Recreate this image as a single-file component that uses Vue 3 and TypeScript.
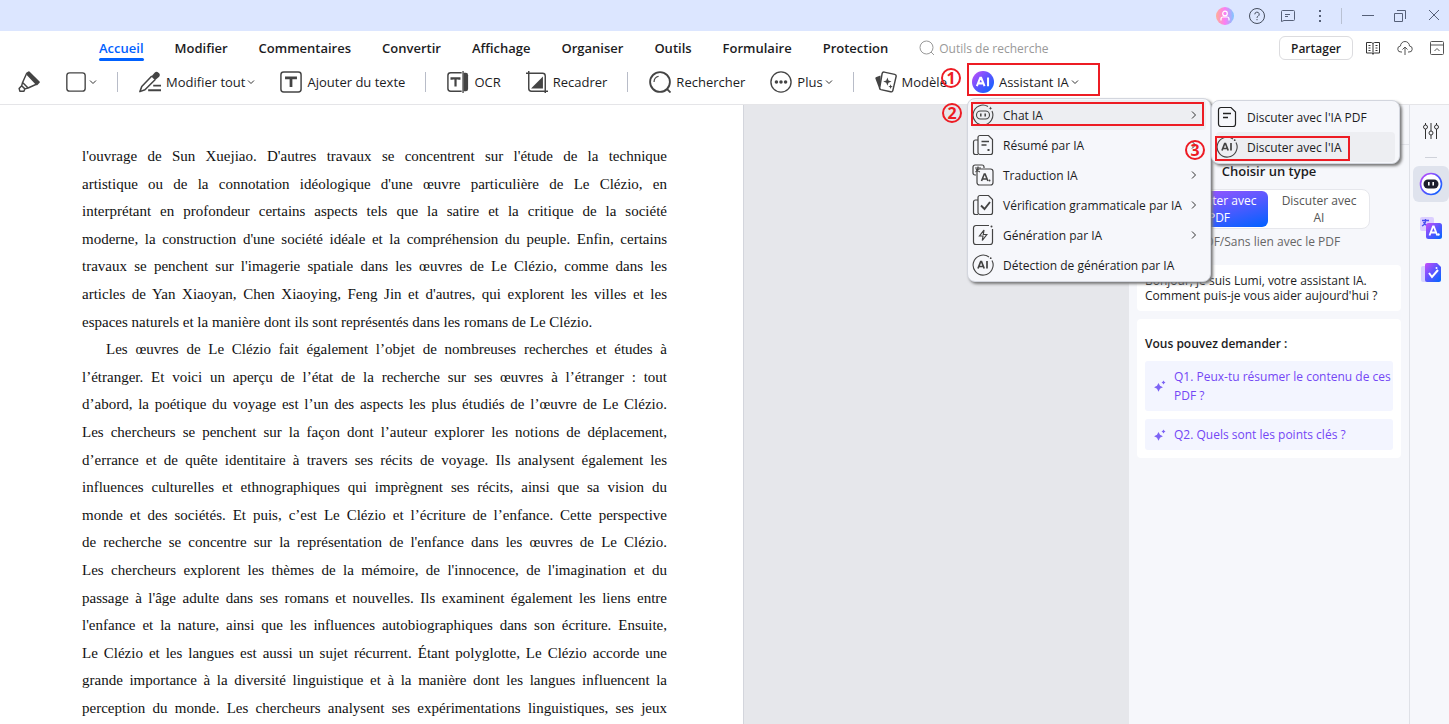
<script setup lang="ts">
import { ref } from 'vue'

interface Tool { icon: string; label?: string; arrow?: boolean }
interface MenuItem { icon: string; label: string; arrow?: boolean }

const tabs: string[] = ['Accueil', 'Modifier', 'Commentaires', 'Convertir', 'Affichage', 'Organiser', 'Outils', 'Formulaire', 'Protection']
const activeTab = ref('Accueil')
const query = ref('')

const toolGroups: Tool[][] = [
  [{ icon: 'highlighter' }, { icon: 'square', arrow: true }],
  [{ icon: 'edit', label: 'Modifier tout', arrow: true }, { icon: 'text', label: 'Ajouter du texte' }],
  [{ icon: 'ocr', label: 'OCR' }, { icon: 'crop', label: 'Recadrer' }],
  [{ icon: 'search', label: 'Rechercher' }, { icon: 'more', label: 'Plus', arrow: true }],
  [{ icon: 'template', label: 'Modèle' }, { icon: 'ai-fill', label: 'Assistant IA', arrow: true }],
]

const menu: MenuItem[] = [
  { icon: 'bot', label: 'Chat IA', arrow: true },
  { icon: 'summary', label: 'Résumé par IA', arrow: true },
  { icon: 'translate', label: 'Traduction IA', arrow: true },
  { icon: 'check', label: 'Vérification grammaticale par IA', arrow: true },
  { icon: 'bolt', label: 'Génération par IA', arrow: true },
  { icon: 'ai', label: 'Détection de génération par IA' },
]
const submenu: MenuItem[] = [
  { icon: 'doc', label: "Discuter avec l'IA PDF" },
  { icon: 'ai', label: "Discuter avec l'IA" },
]

const paragraphs: string[][] = [
  [
    "l'ouvrage de Sun Xuejiao. D'autres travaux se concentrent sur l'étude de la technique",
    "artistique ou de la connotation idéologique d'une œuvre particulière de Le Clézio, en",
    'interprétant en profondeur certains aspects tels que la satire et la critique de la société',
    "moderne, la construction d'une société idéale et la compréhension du peuple. Enfin, certains",
    "travaux se penchent sur l'imagerie spatiale dans les œuvres de Le Clézio, comme dans les",
    "articles de Yan Xiaoyan, Chen Xiaoying, Feng Jin et d'autres, qui explorent les villes et les",
    'espaces naturels et la manière dont ils sont représentés dans les romans de Le Clézio.',
  ],
  [
    'Les œuvres de Le Clézio fait également l’objet de nombreuses recherches et études à',
    'l’étranger. Et voici un aperçu de l’état de la recherche sur ses œuvres à l’étranger : tout',
    'd’abord, la poétique du voyage est l’un des aspects les plus étudiés de l’œuvre de Le Clézio.',
    'Les chercheurs se penchent sur la façon dont l’auteur explorer les notions de déplacement,',
    'd’errance et de quête identitaire à travers ses récits de voyage. Ils analysent également les',
    'influences culturelles et ethnographiques qui imprègnent ses récits, ainsi que sa vision du',
    'monde et des sociétés. Et puis, c’est Le Clézio et l’écriture de l’enfance. Cette perspective',
    "de recherche se concentre sur la représentation de l'enfance dans les œuvres de Le Clézio.",
    "Les chercheurs explorent les thèmes de la mémoire, de l'innocence, de l'imagination et du",
    "passage à l'âge adulte dans ses romans et nouvelles. Ils examinent également les liens entre",
    "l'enfance et la nature, ainsi que les influences autobiographiques dans son écriture. Ensuite,",
    'Le Clézio et les langues est aussi un sujet récurrent. Étant polyglotte, Le Clézio accorde une',
    'grande importance à la diversité linguistique et à la manière dont les langues influencent la',
    'perception du monde. Les chercheurs analysent ses expérimentations linguistiques, ses jeux',
  ],
]

const questions: string[] = ['Q1. Peux-tu résumer le contenu de ces PDF ?', 'Q2. Quels sont les points clés ?']
</script>

<template>
  <svg class="defs" width="0" height="0" aria-hidden="true">
    <defs>
      <linearGradient id="g-ai" x1="0" y1="0" x2="1" y2="1"><stop offset="0" stop-color="#c94dfa" /><stop offset=".5" stop-color="#5a55ff" /><stop offset="1" stop-color="#0066ff" /></linearGradient>
      <linearGradient id="g-user" x1="0" y1="0" x2="1" y2="0"><stop offset="0" stop-color="#ffae96" /><stop offset=".5" stop-color="#fc7df5" /><stop offset="1" stop-color="#7cc8ff" /></linearGradient>
    </defs>
    <symbol id="highlighter" viewBox="0 0 24 24"><path d="M9.500 2.800 11.800 1.300 22.800 12.200 20.500 14.500Z" fill="#444" stroke="#444" stroke-width="2" stroke-linejoin="round" /><path d="M9 3.500 5 12.500 11 18.500 20 14.500M5 12.500 4 16 7.500 19.500 11 18.500M4 16 1.200 19 2 22H6.500L7.500 19.500" fill="none" stroke="#444" stroke-width="1.600" stroke-linejoin="round" /></symbol>
    <symbol id="square" viewBox="0 0 24 24"><rect x="2" y="2" width="20" height="20" rx="3" fill="none" stroke="#444" stroke-width="1.500" /></symbol>
    <symbol id="edit" viewBox="0 0 24 24"><path d="M13.500 6 17 1.800a3 3 0 0 1 4.200 0l.5.500a3 3 0 0 1 0 4.200L17.500 10Z" fill="#444" /><path d="M14 5.500 3 17 1 22.500 6.500 20.500 17.500 9.500" fill="none" stroke="#444" stroke-width="1.700" stroke-linejoin="round" /><path d="M15.500 16H24M10 21h14" stroke="#444" stroke-width="2" /></symbol>
    <symbol id="text" viewBox="0 0 24 24"><rect x="1" y="1" width="22" height="22" rx="3" fill="none" stroke="#444" stroke-width="1.600" /><path d="M7 9V7.500h10V9M12 7v10.500" fill="none" stroke="#444" stroke-width="3" /></symbol>
    <symbol id="ocr" viewBox="0 0 24 24"><path d="M16 2H4a3 3 0 0 0-3 3v14a3 3 0 0 0 3 3h12" fill="none" stroke="#444" stroke-width="1.600" /><path d="M18 2h2.500A2.500 2.500 0 0 1 23 4.500v15a2.500 2.500 0 0 1-2.500 2.500H18Z" fill="#444" /><path d="M17.500 0v24" stroke="#444" stroke-width="1.400" /><path d="M5 9.500V8h8.500v1.500M9.300 8v9" fill="none" stroke="#444" stroke-width="2.400" /></symbol>
    <symbol id="crop" viewBox="0 0 24 24"><path d="M3 0v19a3 3 0 0 0 3 3h18M0 2.500h18a3 3 0 0 1 3 3V24" fill="none" stroke="#444" stroke-width="1.600" /><path d="M18.500 6v13h-13Z" fill="#444" /></symbol>
    <symbol id="search" viewBox="0 0 24 24"><circle cx="12" cy="12" r="10.800" fill="none" stroke="#444" stroke-width="2" /><path d="m19.500 19.500 4 4" stroke="#444" stroke-width="2" /><path d="M5.500 12a6.500 6.500 0 0 1 5-6.300" fill="none" stroke="#444" stroke-width="1.300" /></symbol>
    <symbol id="more" viewBox="0 0 24 24"><circle cx="12" cy="12" r="11" fill="none" stroke="#444" stroke-width="1.500" /><g fill="#444"><circle cx="7" cy="12" r="1.900" /><circle cx="12" cy="12" r="1.900" /><circle cx="17" cy="12" r="1.900" /></g></symbol>
    <symbol id="template" viewBox="0 0 24 24"><path d="M6 5 1.500 6.500a1.500 1.500 0 0 0-1 2L4.500 19a1.500 1.500 0 0 0 2 1Z" fill="#444" /><path d="m10 1.200 11.500 2.500a2 2 0 0 1 1.500 2.500l-3.500 15a2 2 0 0 1-2.500 1.500L6.500 20.300a2 2 0 0 1-1.300-2.500L7.800 2.700A2 2 0 0 1 10 1.200Z" fill="#fff" stroke="#444" stroke-width="1.600" /><path d="m13.500 7 1.200 3.300L18 11.500l-3.300 1.200L13.500 16l-1.200-3.300L9 11.500l3.300-1.200ZM17 14.500l.7 1.800 1.800.7-1.800.7-.7 1.800-.7-1.800-1.800-.7 1.800-.7Z" fill="#444" /></symbol>
    <symbol id="ai-fill" viewBox="0 0 24 24"><circle cx="12" cy="12" r="12" fill="url(#g-ai)" /><path d="m5.300 16.500 3.700-9h1l3.700 9M6.800 13.500h5.500M17.500 7.200v9.300" fill="none" stroke="#fff" stroke-width="2.200" /></symbol>
    <symbol id="chev" viewBox="0 0 8 8"><path d="m1 2.500 3 3 3-3" fill="none" stroke="#333" stroke-width="1" /></symbol>
    <symbol id="right" viewBox="0 0 8 8"><path d="m2 .5 3.500 3.500L2 7.500" fill="none" stroke="#333" stroke-width="1" /></symbol>
    <symbol id="bot" viewBox="0 0 22 22"><g fill="none" stroke="#444" stroke-width="1.100"><path d="M16 2.500A9.900 9.900 0 1 0 20 7" /><rect x="4.500" y="7" width="13" height="8" rx="4" /><path d="M8.800 9.500v3M13.200 9.500v3" stroke-width="1.500" /></g><path d="m18.500 2.500.5 1.300 1.300.5-1.300.5-.5 1.300-.5-1.300-1.300-.5 1.300-.5Z" fill="#444" /></symbol>
    <symbol id="summary" viewBox="0 0 22 22"><g fill="none" stroke="#444" stroke-width="1.200"><path d="M6 6H3.500a2 2 0 0 0-2 2v10.500a2 2 0 0 0 2 2H6" /><path d="M8 1.500h8.500l4 4v13a2 2 0 0 1-2 2H8a2 2 0 0 1-2-2v-15a2 2 0 0 1 2-2Z" /><path d="M9.500 7.500H17M9.500 11h5" stroke-width="1.500" /></g><path d="M15.500 15H17.500V17h-2z" fill="#444" /></symbol>
    <symbol id="translate" viewBox="0 0 22 22"><g fill="none" stroke="#444" stroke-width="1.200"><path d="M4 11H3a2 2 0 0 1-2-2V3a2 2 0 0 1 2-2h7a2 2 0 0 1 2 2v1" /><path d="M3 4h6M6 2.500V4c0 2-1 3-2.500 4M4 5c1 1.500 2 2.500 4 3" /><rect x="5" y="5" width="16" height="16" rx="2.500" /><path d="m9.500 17 2.800-7h.8l2.800 7M10.500 15h4.500" stroke-width="1.600" /></g><circle cx="17.500" cy="16.500" r="1" fill="#444" /></symbol>
    <symbol id="check" viewBox="0 0 22 22"><g fill="none" stroke="#444" stroke-width="1.200"><path d="M6 6H3.500a2 2 0 0 0-2 2v10.500a2 2 0 0 0 2 2H6" /><path d="M8 1.500h8.500l4 4v13a2 2 0 0 1-2 2H8a2 2 0 0 1-2-2v-15a2 2 0 0 1 2-2Z" /><path d="m9 11.500 3.500 3.500 5.500-7" stroke-width="1.900" /></g></symbol>
    <symbol id="bolt" viewBox="0 0 22 22"><g fill="none" stroke="#444" stroke-width="1.200"><path d="M17 1.500H4A2.500 2.500 0 0 0 1.500 4v14A2.500 2.500 0 0 0 4 20.500h14a2.500 2.500 0 0 0 2.500-2.500V5" /><path d="M12 6 7.500 12H11l-.7 4.500L14.800 10.500h-3.500Z" /></g><circle cx="19.500" cy="2.500" r="1" fill="#444" /></symbol>
    <symbol id="ai" viewBox="0 0 22 22"><g fill="none" stroke="#444" stroke-width="1.100"><path d="M17 3A10 10 0 1 0 20 6.500" /><path d="m6 14.500 2.700-7h.8l2.700 7M7 12.500h4.300M15 7v7.500" stroke-width="1.700" /></g><circle cx="18.700" cy="4.200" r=".9" fill="#444" /></symbol>
    <symbol id="doc" viewBox="0 0 22 22"><g fill="none" stroke="#222" stroke-width="1.200"><path d="M5 1.500h10l4.500 4.500v12a2.500 2.500 0 0 1-2.500 2.500H5A2.500 2.500 0 0 1 2.500 18V4A2.500 2.500 0 0 1 5 1.500Z" /><path d="M7 7.500h8M7 11.500h5" stroke-width="1.600" /></g></symbol>
    <symbol id="spark" viewBox="0 0 12 12"><path d="m4.500 3 1.500 2.700 2.900 1.500-2.900 1.500-1.500 3-1.500-3L.1 7.200 3 5.700ZM9.500.5l.8 1.200 1.200.8-1.200.8-.8 1.200-.8-1.200-1.200-.8 1.200-.8Z" fill="#7c63f5" /></symbol>
  </svg>

  <div class="app">
    <header class="titlebar">
      <button class="plain" aria-label="Compte"><svg width="18" height="18" viewBox="0 0 18 18"><circle cx="9" cy="9" r="9" fill="url(#g-user)" /><circle cx="9" cy="6.500" r="2.300" fill="none" stroke="#fff" stroke-width="1.200" /><path d="M5 13.500V12a2 2 0 0 1 2-2h4a2 2 0 0 1 2 2v1.500" fill="none" stroke="#fff" stroke-width="1.200" /></svg></button>
      <button class="plain" aria-label="Aide"><svg width="18" height="18" viewBox="0 0 18 18" fill="none" stroke="#444c5c"><circle cx="9" cy="9" r="7.500" /><path d="M6.800 7.300a2.200 2.200 0 1 1 3.200 2c-.8.400-1 .8-1 1.500M9 12v1.200" /></svg></button>
      <button class="plain" aria-label="Commentaires"><svg width="16" height="16" viewBox="0 0 16 16" fill="none" stroke="#566078"><path d="M1.500 13.500v-10a1 1 0 0 1 1-1h11a1 1 0 0 1 1 1v8a1 1 0 0 1-1 1H4Z M5 6.500h5M5 8.500h3" /></svg></button>
      <button class="plain" aria-label="Options"><svg width="16" height="16" viewBox="0 0 16 16" fill="#566078"><path d="M7 2h2v2H7zM7 7h2v2H7zM7 12h2v2H7z" /></svg></button>
      <i class="divider"></i>
      <button class="plain" aria-label="Réduire"><svg width="16" height="16" viewBox="0 0 16 16" stroke="#566078"><path d="M2 7.500h12" /></svg></button>
      <button class="plain" aria-label="Restaurer"><svg width="16" height="16" viewBox="0 0 16 16" fill="none" stroke="#566078"><path d="M2.500 5.500h8v8h-8zM5 2.500h8.500V11" /></svg></button>
      <button class="plain close" aria-label="Fermer"><svg width="16" height="16" viewBox="0 0 16 16" stroke="#566078"><path d="m3 2 10 10M13 2 3 12" /></svg></button>
    </header>

    <nav class="tabs">
      <button v-for="tab in tabs" :key="tab" class="tab" :class="{ active: tab === activeTab }" @click="activeTab = tab">{{ tab }}</button>
      <label class="finder">
        <svg width="16" height="16" viewBox="0 0 16 16" fill="none" stroke="#999"><circle cx="7.500" cy="7.500" r="6.500" /><path d="m12 12 3 3" /></svg>
        <input v-model="query" type="text" placeholder="Outils de recherche" aria-label="Outils de recherche" />
      </label>
      <button class="share">Partager</button>
      <button class="plain" aria-label="Lecture"><svg width="16" height="16" viewBox="0 0 16 16" fill="none" stroke="#333"><path d="M8 3.500v11M8 3.500l-1.500-1h-5v10.500h5l1.500 1 1.500-1h5V2.500h-5ZM3.500 5.500h2M3.500 8h2M3.500 10.500h2M10.500 5.500h2M10.500 8h2M10.500 10.500h2" /></svg></button>
      <button class="plain" aria-label="Nuage"><svg width="16" height="16" viewBox="0 0 16 16" fill="none" stroke="#555"><path d="M5 12H4a3 3 0 0 1-.5-6 4.500 4.500 0 0 1 9 0 3 3 0 0 1-.5 6h-1M8 15V7M5.500 9.500 8 7l2.500 2.500" /></svg></button>
      <button class="plain" aria-label="Replier"><svg width="16" height="16" viewBox="0 0 16 16" fill="none" stroke="#555"><rect x="1.500" y="1.500" width="13" height="13" rx="1" /><path d="M1.500 5h13M5.500 11 8 8.500l2.500 2.500" /></svg></button>
    </nav>

    <div class="toolbar">
      <div v-for="(group, g) in toolGroups" :key="g" class="group">
        <button v-for="tool in group" :key="tool.icon" class="tool" :aria-label="tool.label || tool.icon">
          <svg class="tool-icon"><use :href="'#' + tool.icon" /></svg>
          <span v-if="tool.label">{{ tool.label }}</span>
          <svg v-if="tool.arrow" class="arrow"><use href="#chev" /></svg>
        </button>
      </div>
    </div>

    <main class="body">
      <section class="canvas">
        <article class="page">
          <p v-for="(lines, p) in paragraphs" :key="p" :class="{ indent: p > 0 }">
            <span v-for="line in lines" :key="line" class="line" :class="{ last: line.startsWith('espaces') }">{{ line }}</span>
          </p>
        </article>
      </section>

      <aside class="panel">
        <div class="panel-head"></div>
        <h2>Choisir un type</h2>
        <div class="switch">
          <button class="choice on">Discuter avec PDF</button>
          <button class="choice">Discuter avec AI</button>
        </div>
        <p class="hint">PDF/Sans lien avec le PDF</p>
        <div class="bubble">Bonjour, je suis Lumi, votre assistant IA.<br />Comment puis-je vous aider aujourd'hui ?</div>
        <div class="ask">
          <h3>Vous pouvez demander :</h3>
          <button v-for="q in questions" :key="q" class="question">
            <svg width="12" height="12"><use href="#spark" /></svg>
            <span>{{ q }}</span>
          </button>
        </div>
      </aside>

      <aside class="rail">
        <button class="plain" aria-label="Réglages"><svg width="18" height="18" viewBox="0 0 18 18" fill="none" stroke="#333"><path d="M3.500 1v2M3.500 7v10M9 1v8M9 13v4M14.500 1v2M14.500 7v10" /><circle cx="3.500" cy="5" r="2" /><circle cx="9" cy="11" r="2" /><circle cx="14.500" cy="5" r="2" /></svg></button>
        <i class="rail-line"></i>
        <button class="plain rail-on" aria-label="Lumi"><svg width="24" height="24" viewBox="0 0 24 24"><circle cx="12" cy="12" r="10.500" fill="#fff" stroke="url(#g-ai)" stroke-width="1.600" /><rect x="4.500" y="7.500" width="15" height="9" rx="4.500" fill="#1e1f2d" /><path d="M9.800 10v3.500M14.200 10v3.500" stroke="#fff" stroke-width="1.600" /></svg></button>
        <button class="plain" aria-label="Traduction"><svg width="24" height="24" viewBox="0 0 24 24"><rect x="1" y="1" width="14" height="14" rx="2" fill="#dccfff" /><path d="M3 4.500h7M6.500 3v2c0 2.500-1.500 4-3.500 5M4.500 6c1 2 2.500 3.500 5 4" fill="none" stroke="#4a4cf0" stroke-width="1.300" /><rect x="7" y="7" width="16" height="16" rx="2.500" fill="url(#g-ai)" /><path d="m10.500 19.500 3.500-9h.8l3.500 9M12 16.500h5" fill="none" stroke="#fff" stroke-width="1.800" /><circle cx="19.500" cy="18.500" r="1.200" fill="#fff" /></svg></button>
        <button class="plain" aria-label="Vérification"><svg width="24" height="24" viewBox="0 0 24 24"><rect x="2" y="6" width="12" height="16" rx="2" fill="#d6d3ff" /><path d="M8 3h10l4 4v13a2 2 0 0 1-2 2H8a2 2 0 0 1-2-2V5a2 2 0 0 1 2-2Z" fill="url(#g-ai)" /><path d="m10 13 3 4 6-7" fill="none" stroke="#fff" stroke-width="2" /><circle cx="17.500" cy="8" r="1" fill="#fff" /></svg></button>
      </aside>
    </main>

    <div class="menu main-menu" role="menu">
      <button v-for="(item, i) in menu" :key="item.label" class="item" :class="{ hover: i === 0 }" role="menuitem">
        <svg class="item-icon"><use :href="'#' + item.icon" /></svg>
        <span>{{ item.label }}</span>
        <svg v-if="item.arrow" class="item-arrow"><use href="#right" /></svg>
      </button>
    </div>
    <div class="menu sub-menu" role="menu">
      <button v-for="(item, i) in submenu" :key="item.label" class="item" :class="{ hover: i === 1 }" role="menuitem">
        <svg class="item-icon"><use :href="'#' + item.icon" /></svg>
        <span>{{ item.label }}</span>
      </button>
    </div>

    <i class="frame frame-1"></i>
    <i class="frame frame-2"></i>
    <i class="frame frame-3"></i>
    <b class="step step-1">1</b>
    <b class="step step-2">2</b>
    <b class="step step-3">3</b>
  </div>
</template>

<style>
body { margin: 0; overflow: hidden; }
</style>

<style scoped>
* { box-sizing: border-box; }
.defs { position: absolute; }
.app { position: relative; height: 100vh; overflow: hidden; display: flex; flex-direction: column; background: #fff; color: #1c1c1e; font-family: "Open Sans", "Noto Sans", sans-serif; font-size: 12px; }
button { border: 0; padding: 0; background: none; color: inherit; font: inherit; cursor: pointer; }
svg { display: block; flex: none; }
.plain { display: grid; place-items: center; width: 16px; height: 24px; }
.titlebar { flex: none; display: flex; justify-content: flex-end; align-items: center; gap: 16px; height: 31px; padding-right: 7px; background: #dce6ff; }
.divider { width: 1px; height: 16px; margin-left: -3px; margin-right: 2px; background: #b9c1d3; }
.close { margin-left: 2px; }
.tabs { flex: none; display: flex; align-items: center; height: 34px; padding-left: 99px; padding-right: 4px; }
.tab { position: relative; height: 100%; margin-right: 31px; font-size: 13px; font-weight: 600; white-space: nowrap; }
.active { color: #0061ff; }
.active::after { content: ""; position: absolute; left: 0; right: 0; bottom: 4px; height: 3px; border-radius: 2px; background: #0061ff; }
.finder { flex: 1; display: flex; align-items: center; gap: 4px; }
.finder input { width: 160px; border: 0; padding: 0; outline: 0; background: none; font: inherit; }
.finder input::placeholder { color: #999; opacity: 1; }
.share { width: 74px; height: 24px; margin-right: -4px; border: 1px solid #dcdcdf; border-radius: 6px; font-weight: 600; }
.tabs .plain { margin-left: 16px; }
.toolbar { flex: none; display: flex; align-items: center; height: 40px; padding-bottom: 6px; border-bottom: 1px solid #e5e5e8; padding-left: 18px; }
.group { display: flex; align-items: center; gap: 25px; }
.group + .group::before { content: ""; width: 1px; height: 20px; margin: 0 -4px 0 20px; background: #b8bcc8; }
.tool { display: flex; align-items: center; gap: 5px; font-size: 13px; white-space: nowrap; }
.tool-icon { width: 22px; height: 22px; }
.arrow { width: 8px; height: 8px; margin-left: -3px; }
.body { flex: 1; min-height: 0; display: flex; }
.canvas { flex: 1; min-width: 0; background: #e6e7eb; }
.page { width: 744px; height: 100%; padding: 38px 76px 0 82px; overflow: hidden; border-right: 1px solid #d3d5dc; background: #fff; color: #111; font: 15px/1.84 "Liberation Serif", serif; }
.page p { margin: 0; }
.line { display: block; white-space: nowrap; text-align: justify; text-align-last: justify; }
.last { text-align-last: left; }
.indent .line:first-child { padding-left: 24px; }
.panel { flex: none; width: 280px; padding: 0 8px; display: flex; flex-direction: column; background: #f6f7fb; }
.panel-head { flex: none; height: 40px; margin: 0 -8px; border-bottom: 1px solid #e3e4ea; }
h2 { margin: 16px 0 8px; font-size: 13px; line-height: 20px; font-weight: 600; text-align: center; }
.switch { align-self: center; display: flex; width: 202px; height: 40px; border: 1px solid #e6e7ec; border-radius: 8px; background: #fff; }
.choice { flex: 1; margin: 1px; padding: 0 8px; border-radius: 6px; line-height: 17px; color: #555; }
.on { color: #fff; background: linear-gradient(165deg, #b052ff, #0061ff); }
.hint { margin: 4px 0 14px; line-height: 18px; text-align: center; color: #666; }
.bubble { padding: 8px; border-radius: 4px; background: #fff; line-height: 15px; white-space: nowrap; }
.ask { display: flex; flex-direction: column; gap: 8px; margin-top: 8px; padding: 16px 8px 8px; border-radius: 4px; background: #fff; }
h3 { margin: 0; font-size: 12px; line-height: 18px; font-weight: 600; }
.question { display: flex; align-items: center; gap: 8px; padding: 6px 0 6px 9px; border-radius: 3px; background: #f3f5ff; color: #7447f5; line-height: 19px; text-align: left; }
.rail { flex: none; width: 40px; display: flex; flex-direction: column; align-items: center; border-left: 1px solid #dfe1e7; background: #f6f7fb; padding: 14px 0 0 3px; }
.rail-line { width: 12px; height: 1px; margin: 14px 0 8px; background: #cfd2da; }
.rail .plain { width: 36px; margin-bottom: 20px; }
.rail .plain:first-child { margin-bottom: 0; }
.rail .rail-on { height: 36px; margin-bottom: 14px; border-radius: 6px; background: #dfe3ed; }
.menu { position: absolute; display: flex; flex-direction: column; padding: 1px 4px; border: 1px solid #d3d6de; border-radius: 8px; background: #f6f7fb; box-shadow: 2px 2px 3px #777; }
.main-menu { left: 967px; top: 98px; width: 244px; }
.sub-menu { left: 1211px; top: 100px; width: 189px; }
.item { display: flex; align-items: center; height: 30px; border-radius: 4px; text-align: left; white-space: nowrap; }
.item span { flex: 1; }
.hover { background: #edeef2; }
.item-icon { width: 22px; height: 22px; margin-right: 9px; }
.item-arrow { width: 8px; height: 8px; margin-right: 8px; }
.frame { position: absolute; border: 2px solid #ed1c24; }
.frame-1 { left: 967px; top: 63px; width: 133px; height: 33px; }
.frame-2 { left: 971px; top: 102px; width: 233px; height: 24px; }
.frame-3 { left: 1215px; top: 136px; width: 135px; height: 25px; }
.step { position: absolute; width: 20px; height: 20px; border: 2px solid #ed1c24; border-radius: 50%; color: #ed1c24; font-size: 16px; line-height: 16px; text-align: center; }
.step-1 { left: 941px; top: 68px; }
.step-2 { left: 942px; top: 103px; }
.step-3 { left: 1185px; top: 140px; }
</style>
